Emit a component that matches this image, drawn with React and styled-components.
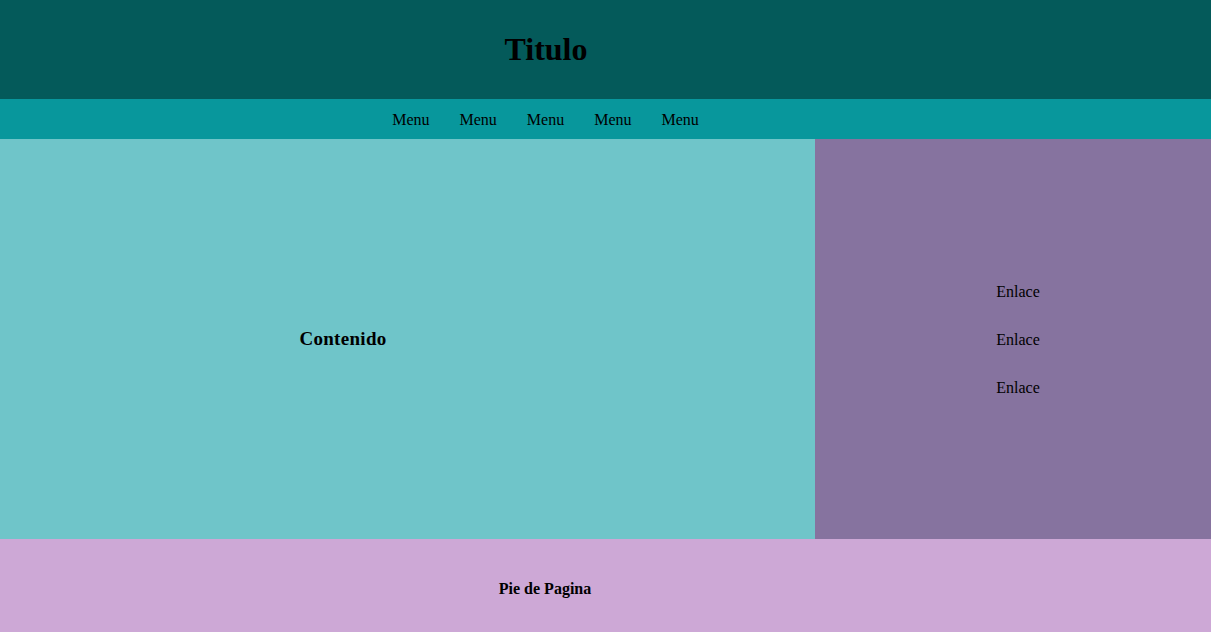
import React from "react";
import styled, { createGlobalStyle } from "styled-components";

const GlobalStyle = createGlobalStyle`
	body {
		margin: 0;
		font-family: "Liberation Serif", "Times New Roman", serif;
		color: #000;
	}
`;

const menus = ["Menu", "Menu", "Menu", "Menu", "Menu"];
const links = ["Enlace", "Enlace", "Enlace"];

const App = () => {
	return (
		<Page>
			<GlobalStyle />
			<Header>
				<Title>Titulo</Title>
			</Header>
			<Nav>
				<NavList>
					{menus.map((m, i) => (
						<NavItem key={i}>{m}</NavItem>
					))}
				</NavList>
			</Nav>
			<Main>
				<Content>
					<ContentTitle>Contenido</ContentTitle>
				</Content>
				<Sidebar>
					{links.map((l, i) => (
						<SideLink key={i}>{l}</SideLink>
					))}
				</Sidebar>
			</Main>
			<Footer>
				<FooterText>Pie de Pagina</FooterText>
			</Footer>
		</Page>
	);
};

export default App;

const Page = styled.div`
	display: flex;
	flex-direction: column;
	width: 100%;
`;

const Header = styled.header`
	background-color: #045a5a;
	height: 99px;
	display: flex;
	align-items: center;
	justify-content: center;
	padding-right: 119px;
`;

const Title = styled.h1`
	font-size: 32px;
	font-weight: bold;
	margin: 0;
`;

const Nav = styled.nav`
	background-color: #08979c;
	height: 40px;
	box-sizing: border-box;
	padding-top: 2px;
	display: flex;
	align-items: center;
	justify-content: center;
	padding-right: 120px;
`;

const NavList = styled.ul`
	list-style: none;
	display: flex;
	margin: 0;
	padding: 0;
`;

const NavItem = styled.li`
	font-size: 16px;
	padding: 0 15px;
`;

const Main = styled.main`
	display: flex;
	height: 400px;
`;

const Content = styled.section`
	background-color: #6fc5c9;
	width: 815px;
	display: flex;
	align-items: center;
	justify-content: center;
	padding-right: 129px;
	box-sizing: border-box;
`;

const ContentTitle = styled.h3`
	font-size: 19px;
	font-weight: bold;
	letter-spacing: 0.3px;
	margin: 0;
`;

const Sidebar = styled.aside`
	background-color: #86739f;
	flex: 1;
	display: flex;
	flex-direction: column;
	align-items: center;
	justify-content: center;
	gap: 30px;
	padding-left: 10px;
	padding-top: 2px;
`;

const SideLink = styled.div`
	font-size: 16px;
	line-height: 18px;
`;

const Footer = styled.footer`
	background-color: #cda8d6;
	height: 100px;
	display: flex;
	align-items: center;
	justify-content: center;
	padding-right: 121px;
`;

const FooterText = styled.h4`
	font-size: 16px;
	font-weight: bold;
	margin: 0;
`;
